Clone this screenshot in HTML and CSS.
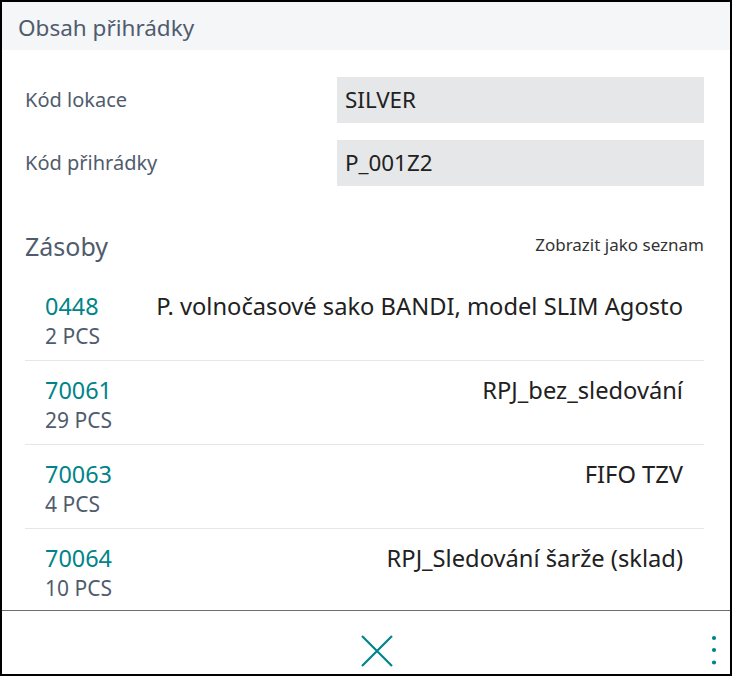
FILE: index.html
```html
<!DOCTYPE html>
<html lang="cs">
<head>
<meta charset="utf-8">
<link rel="stylesheet" href="styles.css">
</head>
<body>
<div class="frame">
  <div class="header">Obsah přihrádky</div>
  <div class="content">
    <div class="fields">
      <div class="field">
        <div class="label">Kód lokace</div>
        <div class="value">SILVER</div>
      </div>
      <div class="field">
        <div class="label">Kód přihrádky</div>
        <div class="value">P_001Z2</div>
      </div>
    </div>
    <div class="section-head">
      <div class="section-title">Zásoby</div>
      <div class="section-link">Zobrazit jako seznam</div>
    </div>
    <div class="list">
      <div class="row">
        <div class="left">
          <div class="num">0448</div>
          <div class="qty">2 PCS</div>
        </div>
        <div class="desc">P. volnočasové sako BANDI, model SLIM Agosto</div>
      </div>
      <div class="row">
        <div class="left">
          <div class="num">70061</div>
          <div class="qty">29 PCS</div>
        </div>
        <div class="desc">RPJ_bez_sledování</div>
      </div>
      <div class="row">
        <div class="left">
          <div class="num">70063</div>
          <div class="qty">4 PCS</div>
        </div>
        <div class="desc">FIFO TZV</div>
      </div>
      <div class="row">
        <div class="left">
          <div class="num">70064</div>
          <div class="qty">10 PCS</div>
        </div>
        <div class="desc">RPJ_Sledování šarže (sklad)</div>
      </div>
    </div>
  </div>
  <div class="footer">
    <div class="close">
      <svg width="32" height="32" viewBox="0 0 32 32"><path d="M1 1L31 31M31 1L1 31" stroke="#008489" stroke-width="2.2" fill="none"/></svg>
    </div>
    <div class="more">
      <svg width="6" height="30" viewBox="0 0 6 30"><circle cx="3" cy="3" r="2.1" fill="#008489"/><circle cx="3" cy="15" r="2.1" fill="#008489"/><circle cx="3" cy="27.5" r="2.1" fill="#008489"/></svg>
    </div>
  </div>
</div>
</body>
</html>
```
FILE: styles.css
```css
html, body {
  margin: 0;
  padding: 0;
  background: #fff;
}
.frame {
  width: 732px;
  height: 676px;
  box-sizing: border-box;
  border: 2px solid #000;
  display: flex;
  flex-direction: column;
  font-family: "Noto Sans", "Open Sans", sans-serif;
  overflow: hidden;
}
.header {
  height: 48px;
  box-sizing: border-box;
  padding-top: 3px;
  background: #f5f6f8;
  color: #505c6d;
  font-size: 22.5px;
  line-height: 45px;
  padding-left: 16px;
  flex: none;
}
.content {
  flex: 1;
  padding: 27px 26px 0 23px;
  overflow: hidden;
  display: flex;
  flex-direction: column;
}
.fields {
  display: flex;
  flex-direction: column;
  gap: 17px;
}
.field {
  display: flex;
  align-items: center;
  height: 46px;
}
.label {
  width: 312px;
  color: #505c6d;
  font-size: 20px;
  margin-top: -2px;
}
.value {
  flex: 1;
  height: 46px;
  background: #e6e7e9;
  color: #212121;
  font-size: 22.4px;
  line-height: 46px;
  padding-left: 8px;
}
.section-head {
  display: flex;
  justify-content: space-between;
  align-items: center;
  margin-top: 43px;
  height: 34px;
}
.section-title {
  color: #505c6d;
  font-size: 25px;
}
.section-link {
  color: #333;
  font-size: 17px;
  margin-top: -4px;
}
.list {
  margin-top: 14px;
}
.row {
  display: flex;
  justify-content: space-between;
  gap: 20px;
  border-bottom: 1px solid #e6e6e6;
  padding: 15px 21px 0 20px;
  box-sizing: content-box;
  height: 68px;
}
.num {
  color: #008489;
  font-size: 23.4px;
  line-height: 28px;
}
.qty {
  color: #505c6d;
  font-size: 21px;
  line-height: 33px;
}
.desc {
  color: #212121;
  font-size: 23.7px;
  line-height: 28px;
  text-align: right;
  white-space: nowrap;
}
.footer {
  flex: none;
  height: 63px;
  border-top: 1px solid #6e6e6e;
  display: flex;
  align-items: center;
}
.close {
  margin-left: 359px;
  display: flex;
  margin-top: 16px;
}
.more {
  margin-left: auto;
  margin-right: 13px;
  display: flex;
  margin-top: 14px;
}
```
